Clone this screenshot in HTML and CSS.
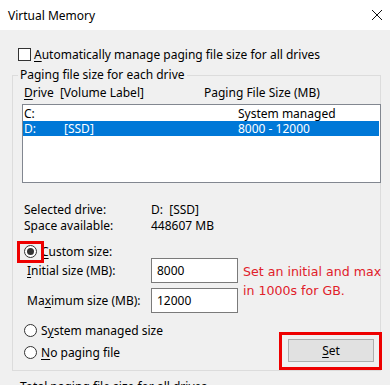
FILE: index.html
```html
<!DOCTYPE html>
<html lang="en">
<head>
    <meta charset="UTF-8">
    <meta name="viewport" content="width=device-width, initial-scale=1.0">
    <title>Virtual Memory</title>
    <link rel="stylesheet" href="styles.css">
</head>
<body>

    <div class="titlebar">
        <span class="title">Virtual Memory</span>
        <svg class="close" width="12" height="12" viewBox="0 0 12 12">
            <path d="M1 1 L11 11 M11 1 L1 11" stroke="#111" stroke-width="1" fill="none"/>
        </svg>
    </div>

    <div class="dialog">
        <label class="check-row">
            <span class="checkbox"></span>
            <span><u>A</u>utomatically manage paging file size for all drives</span>
        </label>

        <fieldset class="group">
            <legend>Paging file size for each drive</legend>

            <div class="list-header">
                <span class="col-drive"><u>D</u>rive&nbsp; [Volume Label]</span>
                <span class="col-size">Paging File Size (MB)</span>
            </div>

            <div class="drive-list">
                <div class="drive-row">
                    <span class="col-letter">C:</span>
                    <span class="col-label"></span>
                    <span class="col-value">System managed</span>
                </div>
                <div class="drive-row selected">
                    <span class="col-letter">D:</span>
                    <span class="col-label">[SSD]</span>
                    <span class="col-value">8000 - 12000</span>
                </div>
            </div>

            <div class="drive-info">
                <span>Selected drive:</span><span>D:&nbsp; [SSD]</span>
                <span>Space available:</span><span>448607 MB</span>
            </div>

            <div class="radio-row custom">
                <span class="radio checked"></span>
                <span><u>C</u>ustom size:</span>
                <span class="mark-radio"></span>
            </div>

            <div class="size-grid">
                <span class="size-label"><u>I</u>nitial size (MB):</span>
                <span class="textbox">8000</span>
                <span class="note">Set an initial and max<br>in 1000s for GB.</span>
                <span class="size-label">Ma<u>x</u>imum size (MB):</span>
                <span class="textbox">12000</span>
            </div>

            <div class="bottom-row">
                <div class="radios">
                    <div class="radio-row">
                        <span class="radio"></span>
                        <span>S<u>y</u>stem managed size</span>
                    </div>
                    <div class="radio-row">
                        <span class="radio"></span>
                        <span><u>N</u>o paging file</span>
                    </div>
                </div>
                <div class="set-mark">
                    <button class="btn"><u>S</u>et</button>
                </div>
            </div>
        </fieldset>

        <p class="total">Total paging file size for all drives</p>
    </div>

</body>
</html>
```

FILE: styles.css
```css
body {
    margin: 0;
    width: 390px;
    height: 385px;
    overflow: hidden;
    background-color: #f0f0f0;
    font-family: "Noto Sans", "Liberation Sans", sans-serif;
    font-size: 12px;
    color: #000;
}
u {
    text-decoration-thickness: 1px;
    text-underline-offset: 2px;
}
.titlebar {
    height: 30px;
    background-color: #fff;
    display: flex;
    align-items: center;
    justify-content: space-between;
    padding: 0 7px 0 8px;
}
.close {
    display: block;
}
.dialog {
    padding: 18px 0 0 12px;
}
.check-row {
    display: flex;
    align-items: center;
    gap: 3px;
    height: 12px;
    margin-left: 6px;
}
.checkbox {
    width: 11px;
    height: 11px;
    border: 1px solid #333;
    background-color: #fff;
}
.group {
    width: 358px;
    margin: 7px 0 0 0;
    padding: 0 0 0 9px;
    border: 1px solid #dcdcdc;
    min-inline-size: 0;
}
.group legend {
    padding: 0 2px;
    margin-left: -4px;
    line-height: 16px;
}
.list-header {
    display: flex;
    height: 16px;
    line-height: 16px;
    margin-top: 2px;
    padding-left: 2px;
}
.col-drive {
    width: 180px;
}
.drive-list {
    width: 357px;
    height: 76px;
    margin-top: 3px;
    background-color: #fff;
    border: 1px solid #828790;
    padding-top: 1px;
    box-sizing: content-box;
}
.drive-row {
    display: flex;
    height: 15px;
    line-height: 15px;
    padding-left: 1px;
    margin-right: 1px;
}
.drive-row.selected {
    background-color: #0078d7;
    color: #fff;
}
.col-letter {
    width: 40px;
}
.col-label {
    width: 174px;
}
.drive-info {
    display: grid;
    grid-template-columns: 127px auto;
    line-height: 16px;
    margin-top: 19px;
    padding-left: 2px;
}
.radio-row {
    display: flex;
    align-items: center;
    gap: 4px;
    height: 16px;
    padding-left: 2px;
}
.radio-row.custom {
    position: relative;
    margin-top: 9px;
}
.radio {
    width: 11px;
    height: 11px;
    border: 1px solid #333;
    border-radius: 50%;
    background-color: #fff;
    position: relative;
}
.radio.checked::after {
    content: "";
    position: absolute;
    left: 2px;
    top: 2px;
    width: 7px;
    height: 7px;
    border-radius: 50%;
    background-color: #333;
}
.mark-radio {
    position: absolute;
    left: -5px;
    top: -2px;
    width: 21px;
    height: 16px;
    border: 3px solid #e00;
}
.size-grid {
    display: grid;
    grid-template-columns: 124px 87px auto;
    grid-template-rows: 25px 25px;
    row-gap: 5px;
    align-items: center;
    margin-top: -1px;
    padding-left: 5px;
}
.size-label {
    grid-column: 1;
    white-space: nowrap;
}
.textbox {
    grid-column: 2;
    height: 25px;
    line-height: 23px;
    border: 1px solid #7a7a7a;
    background-color: #fff;
    padding-left: 5px;
    box-sizing: border-box;
}
.note {
    grid-column: 3;
    grid-row: 1 / span 2;
    align-self: start;
    margin: 4px 0 0 5px;
    font-family: "DejaVu Sans", sans-serif;
    font-size: 12.6px;
    line-height: 19px;
    color: #e0202a;
    white-space: nowrap;
}
.bottom-row {
    display: flex;
    justify-content: space-between;
    margin-top: 9px;
}
.radios {
    display: flex;
    flex-direction: column;
    gap: 6px;
}
.set-mark {
    margin: 10px -2px 0 0;
    padding: 4px 5px 5px 6px;
    border: 3px solid #e00;
    height: 23px;
    line-height: 0;
}
.btn {
    width: 86px;
    height: 23px;
    padding: 0;
    font-family: inherit;
    font-size: 12px;
    background-color: #e1e1e1;
    border: 1px solid #adadad;
    color: #000;
}
.total {
    margin: 8px 0 0 8px;
    line-height: 16px;
}
```
